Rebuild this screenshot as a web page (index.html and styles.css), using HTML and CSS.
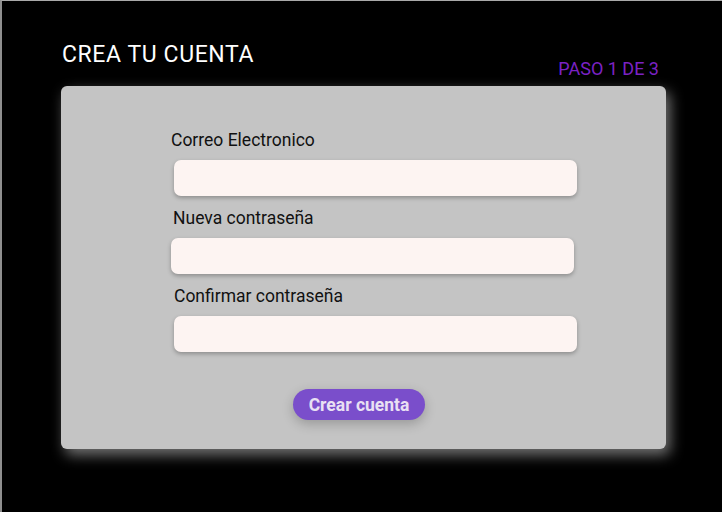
FILE: index.html
```html
<!DOCTYPE html>
<html lang="es">
<head>
<meta charset="utf-8">
<title>Crea tu cuenta</title>
<link rel="stylesheet" href="styles.css">
</head>
<body>
<div class="page">
  <header class="header">
    <h1 class="title">CREA TU CUENTA</h1>
    <span class="step">PASO 1 DE 3</span>
  </header>
  <main class="card">
    <form class="form">
      <div class="field">
        <label class="label" for="email">Correo Electronico</label>
        <input class="input input-a" id="email" type="email">
      </div>
      <div class="field">
        <label class="label label-b" for="pw">Nueva contraseña</label>
        <input class="input" id="pw" type="password">
      </div>
      <div class="field">
        <label class="label label-c" for="pw2">Confirmar contraseña</label>
        <input class="input input-a" id="pw2" type="password">
      </div>
      <button class="btn" type="button">Crear cuenta</button>
    </form>
  </main>
</div>
</body>
</html>
```

FILE: styles.css
```css
* { box-sizing: border-box; }
html, body { margin: 0; padding: 0; background: #000; }
body { font-family: Roboto, "Liberation Sans", Arial, sans-serif; }

.page {
  width: 722px;
  height: 512px;
  background: #000;
  border-top: 1px solid #a9a9a9;
  border-left: 2px solid #8f8f8f;
  padding: 41px 0 0 59px;
  overflow: hidden;
}

.header {
  display: flex;
  align-items: flex-end;
  justify-content: space-between;
  width: 598px;
}

.title {
  margin: 0 0 12px 1px;
  font-size: 23px;
  line-height: 26px;
  font-weight: 400;
  letter-spacing: 0.6px;
  color: #fff;
}

.step {
  font-size: 18px;
  line-height: 22px;
  color: #7b22c4;
}

.card {
  margin-top: 6px;
  width: 605px;
  height: 363px;
  background: #c4c4c4;
  border-radius: 6px;
  box-shadow: 4px 6px 14px rgba(255, 255, 255, 0.45);
  padding: 44px 0 0 110px;
}

.form {
  display: flex;
  flex-direction: column;
  align-items: flex-start;
  gap: 12px;
}

.field {
  display: flex;
  flex-direction: column;
  align-items: flex-start;
}

.label {
  font-size: 17.5px;
  line-height: 20px;
  color: #111;
  margin-bottom: 10px;
}
.label-b { margin-left: 2px; }
.label-c { margin-left: 3px; }

.input {
  width: 403px;
  height: 36px;
  border: none;
  border-radius: 7px;
  background: #fdf4f2;
  box-shadow: 0 2px 4px rgba(0, 0, 0, 0.28);
  outline: none;
}
.input-a { margin-left: 3px; }

.btn {
  margin: 25px 0 0 122px;
  width: 132px;
  height: 31px;
  border: none;
  border-radius: 16px;
  background: #7a4ecb;
  color: #e9e0f3;
  font-family: Roboto, "Liberation Sans", Arial, sans-serif;
  font-size: 17.5px;
  font-weight: 700;
  padding: 0;
  box-shadow: 0 4px 12px rgba(0, 0, 0, 0.22);
}
```
